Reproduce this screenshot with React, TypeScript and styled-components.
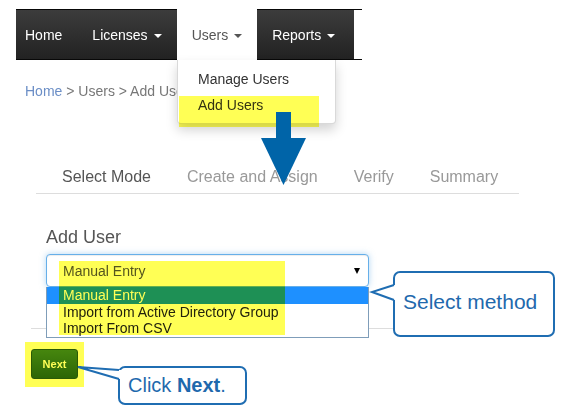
import React from "react";
import styled, { createGlobalStyle } from "styled-components";

const Global = createGlobalStyle`
  html, body { margin: 0; padding: 0; background: #fff; }
  body { font-family: "Liberation Sans", Arial, sans-serif; }
  * { box-sizing: border-box; }
`;

const Page = styled.div`
  position: relative;
  width: 572px;
  height: 417px;
  overflow: hidden;
  padding-top: 9px;
`;

const NavBar = styled.nav`
  position: relative;
  display: flex;
  margin-left: 16px;
  width: 346px;
  height: 51px;
  border-top: 1px solid #080808;
  border-bottom: 1px solid #080808;
`;

const NavList = styled.ul`
  display: flex;
  margin: 0;
  padding: 0;
  list-style: none;
  background: linear-gradient(#3c3c3c, #222222);
  flex: 1;
`;

const NavTail = styled.div`
  width: 8px;
  background: #fff;
`;

const NavItem = styled.li<{ $active?: boolean; $first?: boolean }>`
  position: relative;
  display: flex;
  align-items: center;
  height: ${(p) => (p.$active ? "51px" : "49px")};
  margin: ${(p) => (p.$active ? "-1px 0" : "0")};
  padding: 0 15px 0 ${(p) => (p.$first ? "9px" : "15px")};
  font-size: 14px;
  color: ${(p) => (p.$active ? "#555" : "#fff")};
  background: ${(p) => (p.$active ? "#fff" : "transparent")};
  z-index: ${(p) => (p.$active ? 3 : 1)};
`;

const Caret = styled.span<{ $dark?: boolean }>`
  display: inline-block;
  margin-left: 6px;
  margin-top: 2px;
  border-top: 4px solid ${(p) => (p.$dark ? "#555" : "#fff")};
  border-left: 4px solid transparent;
  border-right: 4px solid transparent;
`;

const Dropdown = styled.ul`
  position: absolute;
  left: 161px;
  top: 50px;
  width: 159px;
  margin: 0;
  padding: 6px 0 5px;
  list-style: none;
  background: #fff;
  border: 1px solid rgba(0, 0, 0, 0.15);
  border-top: none;
  border-radius: 0 0 4px 4px;
  box-shadow: 0 6px 12px rgba(0, 0, 0, 0.175);
  z-index: 5;
`;

const DropItem = styled.li`
  padding: 3px 20px;
  line-height: 20px;
  font-size: 14px;
  color: #333;
`;

const Breadcrumb = styled.div`
  margin-top: 21px;
  padding-left: 25px;
  font-size: 14px;
  line-height: 20px;
  color: #777;
`;

const Crumb = styled.span<{ $link?: boolean }>`
  color: ${(p) => (p.$link ? "#6b8ec6" : "#777")};
`;

const Tabs = styled.ul`
  display: flex;
  margin: 65px 0 0 36px;
  padding: 0 0 0 8px;
  width: 483px;
  list-style: none;
  border-bottom: 1px solid #ddd;
`;

const Tab = styled.li<{ $active?: boolean }>`
  padding: 0 18px 5px;
  font-size: 16px;
  line-height: 22px;
  color: ${(p) => (p.$active ? "#555" : "#999")};
`;

const FormGroup = styled.div`
  position: relative;
  margin: 31px 0 0 46px;
  width: 323px;
`;

const Label = styled.div`
  font-size: 18px;
  line-height: 24px;
  color: #555;
`;

const SelectBox = styled.div`
  display: flex;
  align-items: center;
  justify-content: space-between;
  margin-top: 5px;
  height: 33px;
  padding: 0 8px 0 16px;
  font-size: 14px;
  color: #555;
  border: 1px solid #66afe9;
  border-radius: 4px;
  box-shadow: inset 0 1px 1px rgba(0, 0, 0, 0.075), 0 0 6px rgba(102, 175, 233, 0.5);
  background: #fff;
`;

const SelectArrow = styled.span`
  border-top: 6px solid #000;
  border-left: 3.5px solid transparent;
  border-right: 3.5px solid transparent;
`;

const OptionList = styled.ul`
  position: absolute;
  left: 0;
  top: 62px;
  width: 323px;
  margin: 0;
  padding: 0 0 1px;
  list-style: none;
  background: #fff;
  border: 1px solid #7f9db9;
  border-top: none;
  z-index: 4;
`;

const Option = styled.li<{ $selected?: boolean }>`
  padding-left: 16px;
  height: ${(p) => (p.$selected ? "17px" : "16px")};
  line-height: ${(p) => (p.$selected ? "17px" : "16px")};
  font-size: 14px;
  color: ${(p) => (p.$selected ? "#fff" : "#222")};
  background: ${(p) => (p.$selected ? "#1e90ff" : "#fff")};
`;

const Rule = styled.hr`
  margin: 41px 0 0 31px;
  width: 509px;
  border: none;
  border-top: 1px solid #ddd;
  height: 0;
`;

const NextButton = styled.button`
  display: block;
  margin: 20px 0 0 31px;
  width: 47px;
  height: 30px;
  padding: 0;
  font-family: "Liberation Sans", Arial, sans-serif;
  font-size: 11px;
  font-weight: bold;
  color: #fff;
  background: linear-gradient(#468629, #2c6610);
  border: 1px solid #2a5a14;
  border-radius: 3px;
`;

const Highlight = styled.div<{ $x: number; $y: number; $w: number; $h: number }>`
  position: absolute;
  left: ${(p) => p.$x}px;
  top: ${(p) => p.$y}px;
  width: ${(p) => p.$w}px;
  height: ${(p) => p.$h}px;
  background: #ffff55;
  mix-blend-mode: multiply;
  z-index: 10;
  pointer-events: none;
`;

const Arrow = styled.svg`
  position: absolute;
  left: 261px;
  top: 112px;
  z-index: 11;
`;

const Callout = styled.div<{ $x: number; $y: number; $w: number; $h: number; $size: number }>`
  position: absolute;
  left: ${(p) => p.$x}px;
  top: ${(p) => p.$y}px;
  width: ${(p) => p.$w}px;
  height: ${(p) => p.$h}px;
  display: flex;
  align-items: center;
  padding: 0 0 ${(p) => (p.$size > 20 ? 4 : 1)}px 8px;
  font-size: ${(p) => p.$size}px;
  color: #1f69ad;
  background: #fff;
  border: 2px solid #1f6db2;
  border-radius: 7px;
  z-index: 12;
  white-space: pre;
`;

const Pointer = styled.svg<{ $x: number; $y: number }>`
  position: absolute;
  left: ${(p) => p.$x}px;
  top: ${(p) => p.$y}px;
  z-index: 13;
  overflow: visible;
`;

export default function App() {
  return (
    <Page>
      <Global />
      <NavBar>
        <NavList>
          <NavItem $first>Home</NavItem>
          <NavItem>
            Licenses <Caret />
          </NavItem>
          <NavItem $active>
            Users <Caret $dark />
          </NavItem>
          <NavItem>
            Reports <Caret />
          </NavItem>
        </NavList>
        <NavTail />
        <Dropdown>
          <DropItem>Manage Users</DropItem>
          <DropItem>Add Users</DropItem>
        </Dropdown>
      </NavBar>

      <Breadcrumb>
        <Crumb $link>Home</Crumb> &gt; <Crumb>Users</Crumb> &gt; <Crumb>Add Users</Crumb>
      </Breadcrumb>

      <Tabs>
        <Tab $active>Select Mode</Tab>
        <Tab>Create and Assign</Tab>
        <Tab>Verify</Tab>
        <Tab>Summary</Tab>
      </Tabs>

      <FormGroup>
        <Label>Add User</Label>
        <SelectBox>
          Manual Entry
          <SelectArrow />
        </SelectBox>
        <OptionList>
          <Option $selected>Manual Entry</Option>
          <Option>Import from Active Directory Group</Option>
          <Option>Import From CSV</Option>
        </OptionList>
      </FormGroup>

      <Rule />
      <NextButton>Next</NextButton>

      <Highlight $x={179} $y={96} $w={140} $h={31} />
      <Highlight $x={59} $y={261} $w={226} $h={74} />
      <Highlight $x={25} $y={342} $w={59} $h={45} />

      <Arrow width="45" height="73" viewBox="0 0 45 73">
        <rect x="15" y="0" width="15" height="27" fill="#0064a8" />
        <polygon points="0,26 45,26 22.5,73" fill="#0064a8" />
      </Arrow>

      <Callout $x={393} $y={271} $w={162} $h={66} $size={21}>
        Select method
      </Callout>
      <Pointer $x={370} $y={280} width="28" height="26">
        <polygon points="2,12 24,5 27,5 27,20 24,20" fill="#fff" />
        <polyline points="24,5 2,12 24,20" fill="none" stroke="#1f6db2" strokeWidth="2" />
      </Pointer>

      <Callout $x={118} $y={366} $w={129} $h={39} $size={20}>
        Click <b>Next</b>.
      </Callout>
      <Pointer $x={76} $y={362} width="46" height="22">
        <polygon points="2,5 43,8 46,8 46,17 43,17" fill="#fff" />
        <polyline points="43,8 2,5 43,17" fill="none" stroke="#1f6db2" strokeWidth="2" />
      </Pointer>
    </Page>
  );
}
